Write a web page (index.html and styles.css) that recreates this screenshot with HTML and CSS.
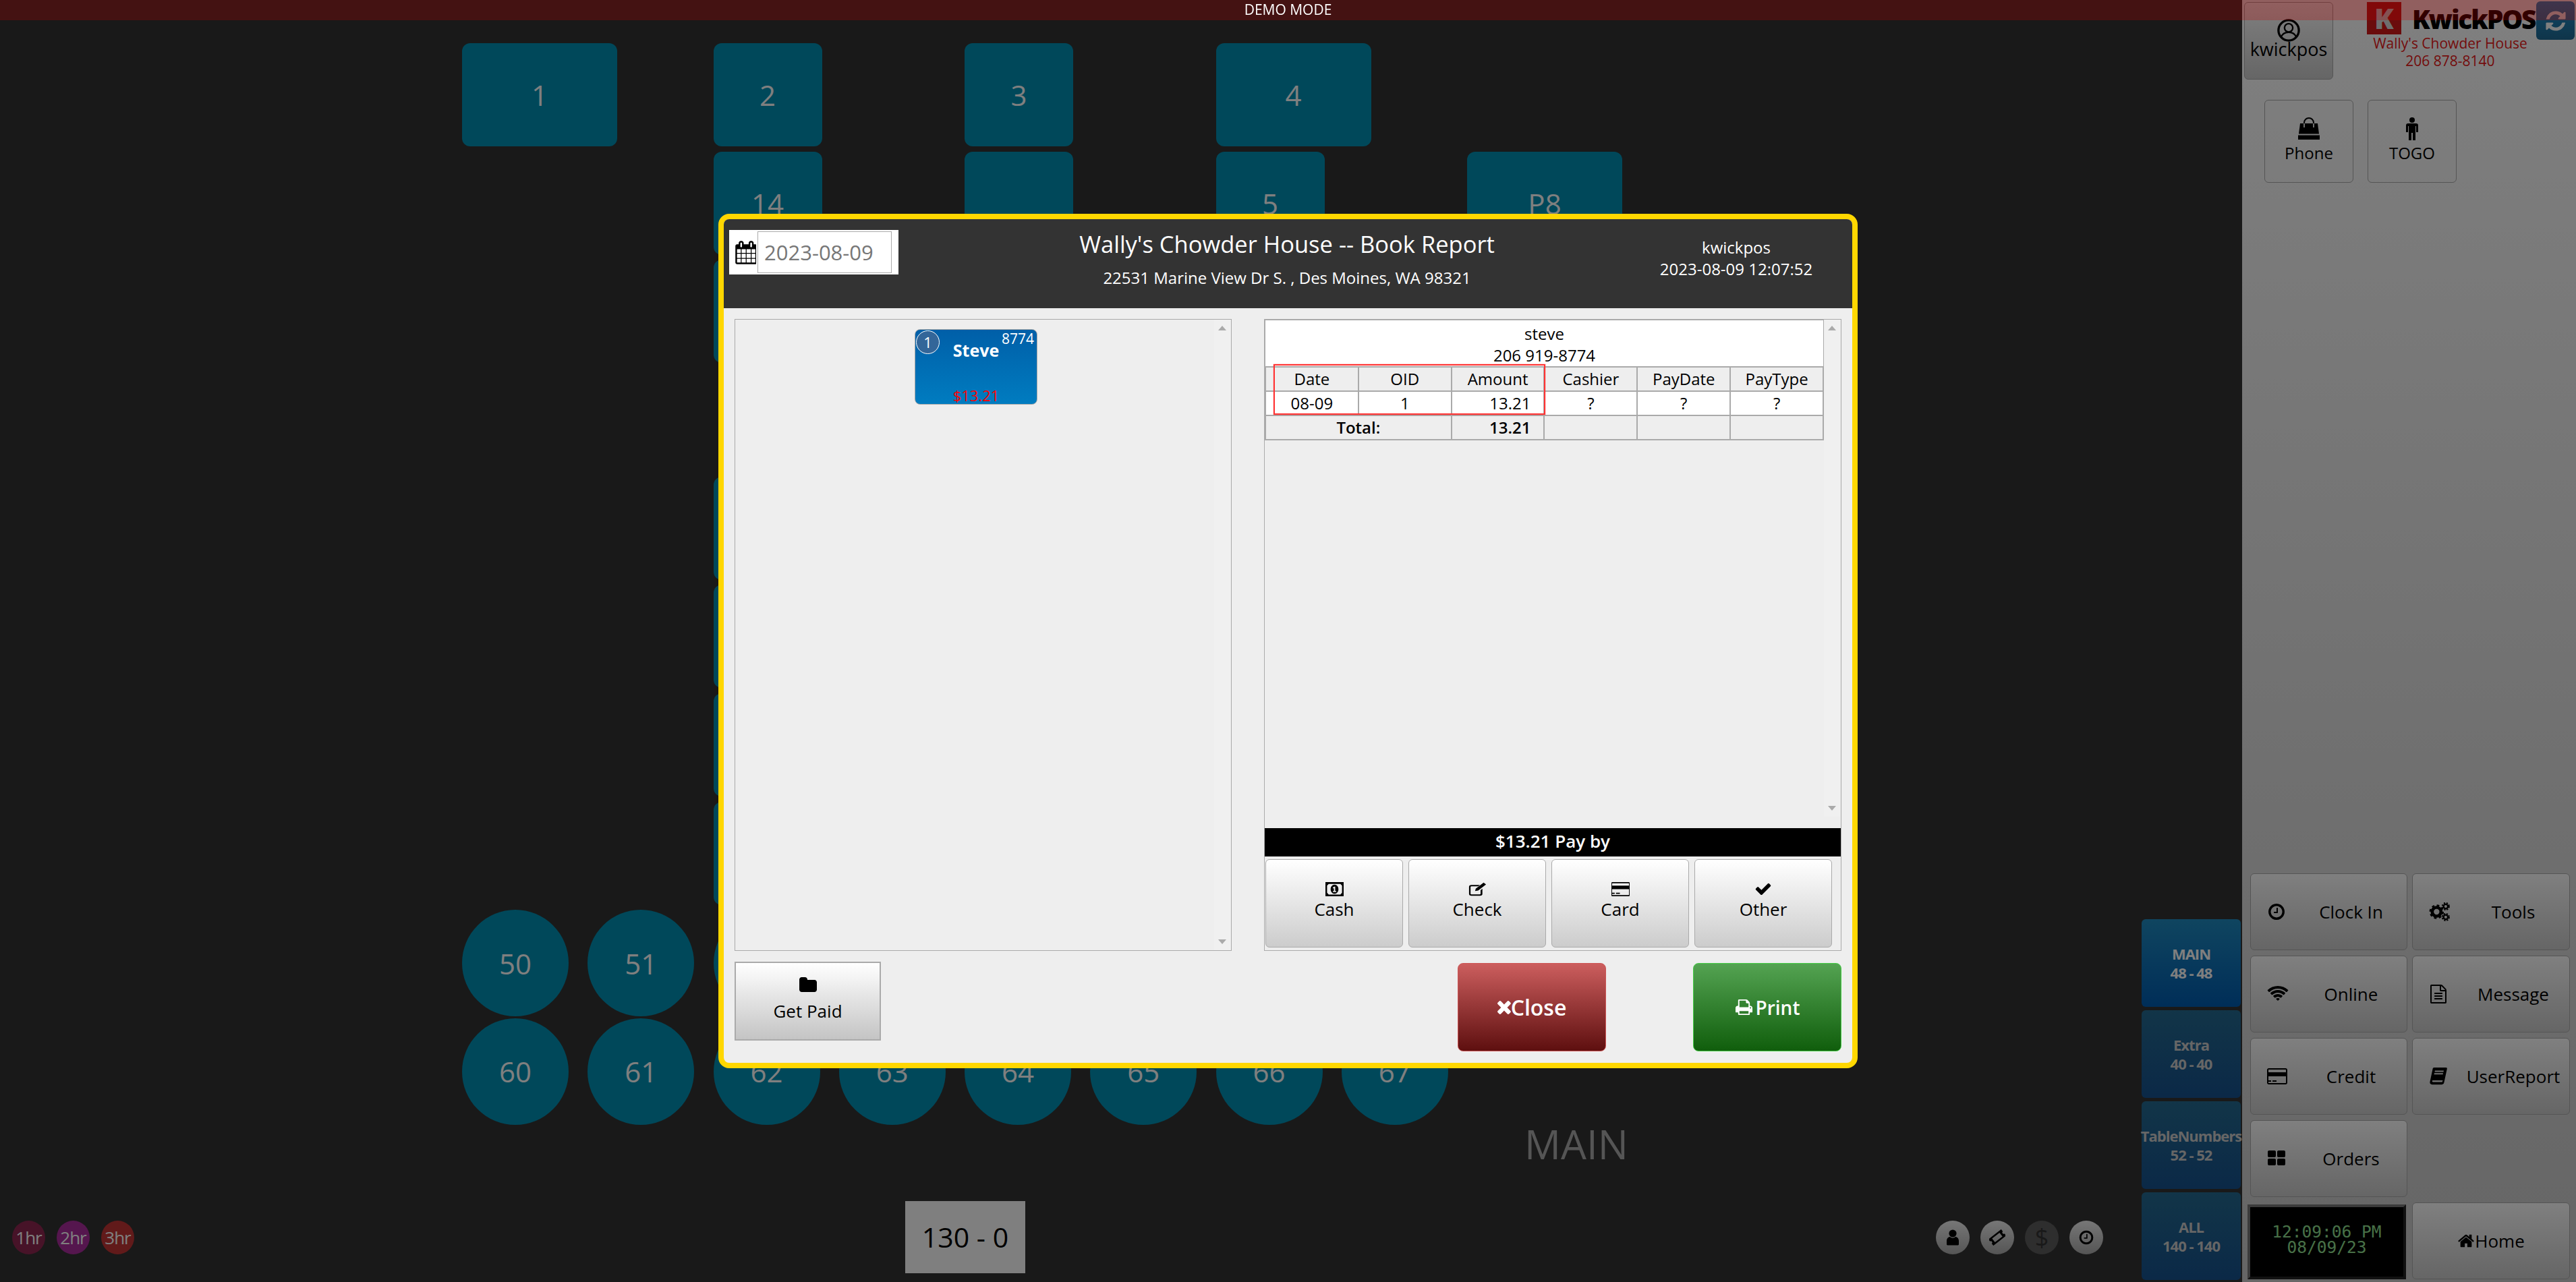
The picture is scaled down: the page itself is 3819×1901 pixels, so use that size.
FILE: index.html
```html
<!DOCTYPE html>
<html lang="en">
<head>
    <meta charset="UTF-8">
    <meta name="viewport" content="width=device-width, initial-scale=1.0">
    <title>KwickPOS - Book Report</title>
    <link rel="stylesheet" href="styles.css">
</head>
<body>
    <div class="demo-bar">DEMO MODE</div>

    <div class="screen">
        <main class="floor">
            <div class="floor-left">
                <div class="plan">
                    <div class="table wide c1 r1">1</div>
                    <div class="table c3 r1">2</div>
                    <div class="table c5 r1">3</div>
                    <div class="table wide c7 r1">4</div>
                    <div class="table c3 r2">14</div>
                    <div class="table c5 r2"></div>
                    <div class="table c7 r2">5</div>
                    <div class="table wide c9 r2">P8</div>
                    <div class="table c3 r3"></div>
                    <div class="table c3 r5"></div>
                    <div class="table c3 r6"></div>
                    <div class="table c3 r7"></div>
                    <div class="table c3 r8"></div>
                    <div class="table round c1 r9">50</div>
                    <div class="table round c2 r9">51</div>
                    <div class="table round c3 r9">52</div>
                    <div class="table round c1 r10">60</div>
                    <div class="table round c2 r10">61</div>
                    <div class="table round c3 r10">62</div>
                    <div class="table round c4 r10">63</div>
                    <div class="table round c5 r10">64</div>
                    <div class="table round c6 r10">65</div>
                    <div class="table round c7 r10">66</div>
                    <div class="table round c8 r10">67</div>
                </div>
                <div class="plan-name">MAIN</div>
                <div class="floor-footer">
                    <div class="timers">
                        <div class="timer t1">1hr</div>
                        <div class="timer t2">2hr</div>
                        <div class="timer t3">3hr</div>
                    </div>
                    <div class="counter">130 - 0</div>
                    <div class="filters">
                        <div class="filter">
                            <svg viewBox="0 0 20 24"><circle cx="10" cy="6" r="5.6"/><path d="M1 22v-5c0-4 3-6 5-6 1 1 2.400 1.700 4 1.700s3-.7 4-1.700c2 0 5 2 5 6v5c0 1-1 1.500-2 1.500H3c-1 0-2-.5-2-1.500z"/></svg>
                        </div>
                        <div class="filter">
                            <svg viewBox="0 0 24 24"><g transform="rotate(-38 12 12)"><path fill-rule="evenodd" d="M0 6h24v4a2 2 0 0 0 0 4v4H0v-4a2 2 0 0 0 0-4zM5 8.500v7h14v-7z"/></g></svg>
                        </div>
                        <div class="filter off">$</div>
                        <div class="filter">
                            <svg viewBox="0 0 1792 1792"><path d="M1024 544v448q0 14-9 23t-23 9h-320q-14 0-23-9t-9-23v-64q0-14 9-23t23-9h224v-352q0-14 9-23t23-9h64q14 0 23 9t9 23zm416 352q0-148-73-273t-198-198-273-73-273 73-198 198-73 273 73 273 198 198 273 73 273-73 198-198 73-273zm224 0q0 209-103 385.500t-279.500 279.500-385.500 103-385.500-103-279.500-279.500-103-385.500 103-385.500 279.500-279.500 385.500-103 385.500 103 279.500 279.500 103 385.500z"/></svg>
                        </div>
                    </div>
                </div>
            </div>
            <div class="tabs">
                <div class="tab active">MAIN<br>48 - 48</div>
                <div class="tab">Extra<br>40 - 40</div>
                <div class="tab">TableNumbers<br>52 - 52</div>
                <div class="tab">ALL<br>140 - 140</div>
            </div>
        </main>

        <aside class="side">
            <div class="side-top">
                <div class="btn user-btn">
                    <svg class="user-icon" viewBox="0 0 36 36"><circle cx="18" cy="18" r="16" fill="none" stroke="#000" stroke-width="3.500"/><circle cx="18" cy="14" r="6.500" fill="none" stroke="#000" stroke-width="2.500"/><path d="M6 29c2-6 7-8 12-8s10 2 12 8" fill="none" stroke="#000" stroke-width="2.500"/></svg>
                    <span>kwickpos</span>
                </div>
                <div class="brand">
                    <div class="logo"><span class="logo-mark">K</span><span class="logo-name">KwickPOS</span></div>
                    <div class="brand-text">Wally's Chowder House<br>206 878-8140</div>
                </div>
                <div class="sync">
                    <svg viewBox="0 0 1792 1792"><path d="M1639 1056q0 5-1 7-64 268-268 434.500t-478 166.500q-146 0-282.500-55t-243.500-157l-129 129q-19 19-45 19t-45-19-19-45v-448q0-26 19-45t45-19h448q26 0 45 19t19 45-19 45l-137 137q71 66 161 102t187 36q134 0 250-65t186-179q11-17 53-117 8-23 30-23h192q13 0 22.500 9.500t9.500 22.500zm25-800v448q0 26-19 45t-45 19h-448q-26 0-45-19t-19-45 19-45l138-138q-148-137-349-137-134 0-250 65t-186 179q-11 17-53 117-8 23-30 23h-199q-13 0-22.500-9.500t-9.500-22.500v-7q65-268 270-434.500t480-166.500q146 0 284 55.500t245 156.500l130-129q19-19 45-19t45 19 19 45z"/></svg>
                </div>
            </div>

            <div class="quick">
                <div class="quick-btn">
                    <svg viewBox="0 0 34 34"><path d="M4 9h26l2 15.500H2z"/><path d="M1 26.500h32V33H1z"/><path d="M10 9V8a7 7 0 0 1 14 0v1" fill="none" stroke="#000" stroke-width="2"/><path d="M10 9v6M24 9v6" fill="none" stroke="#ddd" stroke-width="2"/></svg>
                    <span>Phone</span>
                </div>
                <div class="quick-btn">
                    <svg viewBox="0 0 34 34"><circle cx="17" cy="4" r="4"/><path d="M11 9h12a3 3 0 0 1 3 3v10h-3v-9h-1v21h-4V23h-2v11h-4V13h-1v9H8V12a3 3 0 0 1 3-3z"/></svg>
                    <span>TOGO</span>
                </div>
            </div>

            <div class="menu">
                <div class="btn menu-btn">
                    <svg class="ico" viewBox="0 0 1792 1792"><path d="M1024 544v448q0 14-9 23t-23 9h-320q-14 0-23-9t-9-23v-64q0-14 9-23t23-9h224v-352q0-14 9-23t23-9h64q14 0 23 9t9 23zm416 352q0-148-73-273t-198-198-273-73-273 73-198 198-73 273 73 273 198 198 273 73 273-73 198-198 73-273zm224 0q0 209-103 385.500t-279.500 279.500-385.500 103-385.500-103-279.500-279.500-103-385.500 103-385.500 279.500-279.500 385.500-103 385.500 103 279.500 279.500 103 385.500z"/></svg>
                    <span>Clock In</span>
                </div>
                <div class="btn menu-btn">
                    <svg class="ico ico-wide" viewBox="0 0 34 30"><circle cx="12" cy="15" r="7" fill="none" stroke="#000" stroke-width="5"/><circle cx="12" cy="15" r="10" fill="none" stroke="#000" stroke-width="3" stroke-dasharray="4 3.850"/><circle cx="26.500" cy="6.500" r="3.500" fill="none" stroke="#000" stroke-width="2.500"/><circle cx="26.500" cy="6.500" r="5.500" fill="none" stroke="#000" stroke-width="2" stroke-dasharray="2.400 2"/><circle cx="26.500" cy="23.500" r="3.500" fill="none" stroke="#000" stroke-width="2.500"/><circle cx="26.500" cy="23.500" r="5.500" fill="none" stroke="#000" stroke-width="2" stroke-dasharray="2.400 2"/></svg>
                    <span>Tools</span>
                </div>
                <div class="btn menu-btn">
                    <svg class="ico ico-wide" viewBox="0 0 2048 1792"><path d="M1024 1523q-20 0-93-73.500t-73-93.500q0-32 62.500-54t103.500-22 103.500 22 62.500 54q0 20-73 93.500t-93 73.500zm270-271q-2 0-40-25t-101.500-50-128.500-25-128.500 25-101 50-40.500 25q-18 0-93.500-75t-75.500-93q0-13 10-23 78-77 196-121t233-44 233 44 196 121q10 10 10 23 0 18-75.500 93t-93.500 75zm273-272q-11 0-23-8-136-105-252-154.500t-268-49.500q-85 0-170.500 22t-149 53-113.500 62-79 53-31 22q-17 0-92-75t-75-93q0-12 10-22 132-132 320-205t380-73 380 73 320 205q10 10 10 22 0 18-75 93t-92 75zm271-271q-11 0-22-9-179-157-371.500-236.500t-420.500-79.500-420.500 79.500-371.500 236.500q-11 9-22 9-17 0-92.500-75t-75.500-93q0-13 10-23 187-186 445-288t527-102 527 102 445 288q10 10 10 23 0 18-75.500 93t-92.500 75z"/></svg>
                    <span>Online</span>
                </div>
                <div class="btn menu-btn">
                    <svg class="ico" viewBox="0 0 1792 1792"><path d="M1596 380q28 28 48 76t20 88v1152q0 40-28 68t-68 28h-1344q-40 0-68-28t-28-68v-1600q0-40 28-68t68-28h896q40 0 88 20t76 48zm-444-244v376h376q-10-29-22-41l-313-313q-12-12-41-22zm384 1528v-1024h-416q-40 0-68-28t-28-68v-416h-768v1536h1280zm-1024-864q0-14 9-23t23-9h704q14 0 23 9t9 23v64q0 14-9 23t-23 9h-704q-14 0-23-9t-9-23v-64zm736 224q14 0 23 9t9 23v64q0 14-9 23t-23 9h-704q-14 0-23-9t-9-23v-64q0-14 9-23t23-9h704zm0 256q14 0 23 9t9 23v64q0 14-9 23t-23 9h-704q-14 0-23-9t-9-23v-64q0-14 9-23t23-9h704z"/></svg>
                    <span>Message</span>
                </div>
                <div class="btn menu-btn">
                    <svg class="ico ico-wide" viewBox="0 0 2048 1792"><path d="M1760 128q66 0 113 47t47 113v1216q0 66-47 113t-113 47h-1600q-66 0-113-47t-47-113v-1216q0-66 47-113t113-47h1600zm-1600 128q-13 0-22.500 9.500t-9.500 22.500v224h1664v-224q0-13-9.500-22.500t-22.500-9.500h-1600zm1600 1280q13 0 22.500-9.500t9.500-22.500v-608h-1664v608q0 13 9.500 22.500t22.500 9.500h1600zm-1632-128v-128h256v128h-256zm384 0v-128h384v128h-384z"/></svg>
                    <span>Credit</span>
                </div>
                <div class="btn menu-btn">
                    <svg class="ico" viewBox="0 0 28 30"><path d="M7 1h19c1.500 0 2 1 1.700 2.200L23 25c-.4 1.800-1.700 3-3.500 3H4c-2.500 0-4-2-3.400-4.500L5 3c.2-1.200 1-2 2-2zm1.500 5-.4 2h14l.4-2zm-1 4-.4 2h14l.4-2zM5 21.500c-1 0-1.400 2.500.2 2.500H20l1-2.500z" fill-rule="evenodd"/></svg>
                    <span>UserReport</span>
                </div>
                <div class="btn menu-btn orders-btn">
                    <svg class="ico" viewBox="0 0 1792 1792"><path d="M832 1024v384q0 52-38 90t-90 38h-512q-52 0-90-38t-38-90v-384q0-52 38-90t90-38h512q52 0 90 38t38 90zm0-768v384q0 52-38 90t-90 38h-512q-52 0-90-38t-38-90v-384q0-52 38-90t90-38h512q52 0 90 38t38 90zm896 768v384q0 52-38 90t-90 38h-512q-52 0-90-38t-38-90v-384q0-52 38-90t90-38h512q52 0 90 38t38 90zm0-768v384q0 52-38 90t-90 38h-512q-52 0-90-38t-38-90v-384q0-52 38-90t90-38h512q52 0 90 38t38 90z"/></svg>
                    <span>Orders</span>
                </div>
                <div class="clock">12:09:06 PM<br>08/09/23</div>
                <div class="btn home-btn">
                    <svg viewBox="0 0 1792 1792"><path d="M1472 992v480q0 26-19 45t-45 19h-384v-384h-256v384h-384q-26 0-45-19t-19-45v-480q0-1 .5-3t.5-3l575-474 575 474q1 2 1 6zm223-69l-62 74q-8 9-21 11h-3q-13 0-21-7l-692-577-692 577q-12 8-24 7-13-2-21-11l-62-74q-8-10-7-23.500t11-21.500l719-599q32-26 76-26t76 26l244 204v-195q0-14 9-23t23-9h192q14 0 23 9t9 23v408l219 182q10 8 11 21.500t-7 23.500z"/></svg>
                    <span>Home</span>
                </div>
            </div>
        </aside>
    </div>

    <!-- book report dialog -->
    <div class="backdrop">
        <div class="modal">
            <header class="modal-head">
                <div class="date-box">
                    <svg viewBox="0 0 1664 1792"><path d="M192 1664h288v-288h-288v288zm352 0h320v-288h-320v288zm-352-352h288v-320h-288v320zm352 0h320v-320h-320v320zm-352-384h288v-288h-288v288zm736 736h320v-288h-320v288zm-384-736h320v-288h-320v288zm768 736h288v-288h-288v288zm-384-352h320v-320h-320v320zm-352-864v-288q0-13-9.500-22.500t-22.500-9.500h-64q-13 0-22.500 9.500t-9.500 22.500v288q0 13 9.500 22.500t22.500 9.500h64q13 0 22.500-9.500t9.500-22.500zm736 864h288v-320h-288v320zm-384-384h320v-288h-320v288zm384 0h288v-288h-288v288zm32-480v-288q0-13-9.500-22.500t-22.500-9.500h-64q-13 0-22.500 9.500t-9.500 22.500v288q0 13 9.500 22.500t22.500 9.500h64q13 0 22.500-9.500t9.500-22.500zm384-64v1280q0 52-38 90t-90 38h-1408q-52 0-90-38t-38-90v-1280q0-52 38-90t90-38h128v-96q0-66 47-113t113-47h64q66 0 113 47t47 113v96h384v-96q0-66 47-113t113-47h64q66 0 113 47t47 113v96h128q52 0 90 38t38 90z"/></svg>
                    <div class="date-input">2023-08-09</div>
                </div>
                <div class="head-title">
                    <h1>Wally's Chowder House -- Book Report</h1>
                    <p>22531 Marine View Dr S. , Des Moines, WA 98321</p>
                </div>
                <div class="head-user">kwickpos<br>2023-08-09 12:07:52</div>
            </header>

            <div class="modal-body">
                <section class="panel cards">
                    <div class="card">
                        <span class="card-num">1</span>
                        <span class="card-phone">8774</span>
                        <span class="card-name">Steve</span>
                        <span class="card-amt">$13.21</span>
                    </div>
                    <div class="scroll-arrows"><i class="up"></i><i class="down"></i></div>
                </section>

                <section class="panel report">
                    <div class="report-scroll">
                        <div class="report-table">
                            <div class="report-name">steve<br>206 919-8774</div>
                            <table>
                                <tr class="th"><td>Date</td><td>OID</td><td>Amount</td><td>Cashier</td><td>PayDate</td><td>PayType</td></tr>
                                <tr><td>08-09</td><td>1</td><td class="num">13.21</td><td>?</td><td>?</td><td>?</td></tr>
                                <tr class="total"><td colspan="2">Total:</td><td class="num">13.21</td><td></td><td></td><td></td></tr>
                            </table>
                            <div class="highlight"></div>
                        </div>
                        <div class="scroll-arrows"><i class="up"></i><i class="down"></i></div>
                    </div>
                    <div class="pay-bar">$13.21 Pay by</div>
                    <div class="pay-btns">
                        <div class="pay-btn">
                            <svg class="stretched" viewBox="0 0 28 20" preserveAspectRatio="none"><path fill-rule="evenodd" d="M0 0h28v20H0zM5 2.500 2.500 5v10L5 17.500h18l2.500-2.500V5L23 2.500z"/><path fill-rule="evenodd" d="M14 3.500c3.500 0 6 2.800 6 6.500s-2.500 6.500-6 6.500S8 13.700 8 10s2.500-6.500 6-6.500zm-2.500 4v1.300h1.500v3.900h-1.500V14h5v-1.300H15V6.500h-1.500z"/></svg>
                            <span>Cash</span>
                        </div>
                        <div class="pay-btn">
                            <svg class="stretched" viewBox="0 0 30 30" preserveAspectRatio="none"><path d="M20 25v-8l3-3v11a4 4 0 0 1-4 4H5a4 4 0 0 1-4-4V10a4 4 0 0 1 4-4h14l-3 3H5a1.500 1.500 0 0 0-1.500 1.500v14A1.500 1.500 0 0 0 5 26h13.500A1.500 1.500 0 0 0 20 25z"/><path d="M25 1l4 4-13 13-5 1 1-5z"/></svg>
                            <span>Check</span>
                        </div>
                        <div class="pay-btn">
                            <svg class="stretched" viewBox="128 128 1792 1536" preserveAspectRatio="none"><path d="M1760 128q66 0 113 47t47 113v1216q0 66-47 113t-113 47h-1600q-66 0-113-47t-47-113v-1216q0-66 47-113t113-47h1600zm-1600 128q-13 0-22.500 9.500t-9.500 22.500v224h1664v-224q0-13-9.500-22.500t-22.500-9.500h-1600zm1600 1280q13 0 22.500-9.500t9.500-22.500v-608h-1664v608q0 13 9.500 22.500t22.500 9.500h1600zm-1632-128v-128h256v128h-256zm384 0v-128h384v128h-384z" transform="translate(64 0)"/></svg>
                            <span>Card</span>
                        </div>
                        <div class="pay-btn">
                            <svg viewBox="0 0 1792 1792"><path d="M1671 566q0 40-28 68l-724 724-136 136q-28 28-68 28t-68-28l-136-136-362-362q-28-28-28-68t28-68l136-136q28-28 68-28t68 28l294 295 656-657q28-28 68-28t68 28l136 136q28 28 28 68z"/></svg>
                            <span>Other</span>
                        </div>
                    </div>
                </section>
            </div>

            <footer class="modal-foot">
                <div class="get-paid">
                    <svg viewBox="0 0 1792 1792"><path d="M1728 608v704q0 92-66 158t-158 66h-1216q-92 0-158-66t-66-158v-960q0-92 66-158t158-66h320q92 0 158 66t66 158v32h672q92 0 158 66t66 158z"/></svg>
                    <span>Get Paid</span>
                </div>
                <div class="action close-btn">
                    <svg viewBox="300 300 1200 1260"><path d="M1490 1322q0 40-28 68l-136 136q-28 28-68 28t-68-28l-294-294-294 294q-28 28-68 28t-68-28l-136-136q-28-28-28-68t28-68l294-294-294-294q-28-28-28-68t28-68l136-136q28-28 68-28t68 28l294 294 294-294q28-28 68-28t68 28l136 136q28 28 28 68t-28 68l-294 294 294 294q28 28 28 68z"/></svg>
                    <span>Close</span>
                </div>
                <div class="action print-btn">
                    <svg viewBox="0 0 1792 1792"><path d="M448 1536h896v-256h-896v256zm0-640h896v-384h-160q-40 0-68-28t-28-68v-160h-640v640zm1152 64q0-26-19-45t-45-19-45 19-19 45 19 45 45 19 45-19 19-45zm128 0v416q0 13-9.500 22.500t-22.500 9.500h-224v160q0 40-28 68t-68 28h-960q-40 0-68-28t-28-68v-160h-224q-13 0-22.500-9.500t-9.500-22.500v-416q0-79 56.500-135.500t135.500-56.500h64v-544q0-40 28-68t68-28h672q40 0 88 20t76 48l152 152q28 28 48 76t20 88v256h64q79 0 135.500 56.500t56.500 135.500z"/></svg>
                    <span>Print</span>
                </div>
            </footer>
        </div>
    </div>
</body>
</html>
```

FILE: styles.css
```css
* {
    box-sizing: border-box;
}
html, body {
    margin: 0;
    height: 100%;
}
body {
    font-family: "Open Sans", "Noto Sans", sans-serif;
    background-color: #333;
    overflow: hidden;
    color: #000;
}
svg {
    display: block;
    fill: currentColor;
}

/* demo strip stays above the dialog dimmer */
.demo-bar {
    position: absolute;
    top: 0;
    left: 0;
    right: 0;
    height: 30px;
    line-height: 29px;
    text-align: center;
    font-size: 21px;
    color: #fff;
    background-color: rgba(200, 0, 0, 0.25);
    z-index: 30;
}

.screen {
    display: flex;
    height: 100%;
}

/* floor plan */
.floor {
    flex: 1;
    display: flex;
    justify-content: space-between;
    min-width: 0;
}
.floor-left {
    width: 3175px;
    display: flex;
    flex-direction: column;
}
.plan {
    display: grid;
    grid-template-columns: repeat(9, 186.25px);
    grid-template-rows: repeat(10, 160.67px);
    padding: 64px 0 0 685px;
}
.table {
    width: 161px;
    height: 153px;
    background-color: #0090b4;
    border-radius: 12px;
    color: #fff;
    font-size: 42px;
    display: flex;
    justify-content: center;
    align-items: center;
}
.table.wide {
    width: 230px;
}
.table.round {
    width: 158px;
    height: 158px;
    border-radius: 50%;
}
.c1 { grid-column: 1; }
.c2 { grid-column: 2; }
.c3 { grid-column: 3; }
.c4 { grid-column: 4; }
.c5 { grid-column: 5; }
.c6 { grid-column: 6; }
.c7 { grid-column: 7; }
.c8 { grid-column: 8; }
.c9 { grid-column: 9; }
.r1 { grid-row: 1; }
.r2 { grid-row: 2; }
.r3 { grid-row: 3; }
.r5 { grid-row: 5; }
.r6 { grid-row: 6; }
.r7 { grid-row: 7; }
.r8 { grid-row: 8; }
.r9 { grid-row: 9; }
.r10 { grid-row: 10; }

.plan-name {
    margin: -15px 0 0 2260px;
    font-size: 60px;
    line-height: 80px;
    color: #aaa;
}
.floor-footer {
    margin-top: auto;
    height: 107px;
    margin-bottom: 13px;
    padding: 0 57px 0 18px;
    display: flex;
    align-items: center;
}
.timers {
    display: flex;
    gap: 17px;
}
.timer {
    width: 49px;
    height: 50px;
    border-radius: 50%;
    color: #fff;
    font-size: 26px;
    line-height: 50px;
    text-align: center;
    letter-spacing: -1px;
}
.t1 { background-color: #8e2650; }
.t2 { background-color: #aa2c9c; }
.t3 { background-color: #c23434; }
.counter {
    margin-left: 1143px;
    width: 178px;
    height: 107px;
    background-color: #fff;
    font-size: 41px;
    line-height: 107px;
    text-align: center;
}
.filters {
    margin-left: auto;
    display: flex;
    gap: 16px;
}
.filter {
    width: 50px;
    height: 50px;
    border-radius: 50%;
    background: linear-gradient(#eee, #aaa);
    display: flex;
    justify-content: center;
    align-items: center;
}
.filter svg {
    width: 24px;
    height: 24px;
}
.filter.off {
    background: #5c5c5c;
    color: #333;
    font-size: 36px;
}

.tabs {
    width: 147px;
    margin: auto 2px 3px 0;
    display: flex;
    flex-direction: column;
    gap: 4.500px;
}
.tab {
    height: 130.500px;
    border-radius: 6px;
    background: linear-gradient(#246a90, #16528f);
    color: #ccc;
    font-size: 22px;
    font-weight: 700;
    line-height: 28px;
    text-align: center;
    white-space: nowrap;
    display: flex;
    align-items: center;
    justify-content: center;
    letter-spacing: -1px;
}
.tab.active {
    background: linear-gradient(#1f8ac0, #005cb0);
    color: #fff;
}

/* right column */
.side {
    width: 495px;
    background: linear-gradient(#fff, #ccc);
    display: flex;
    flex-direction: column;
}
.side-top {
    display: flex;
    align-items: flex-start;
    padding: 3px 0 0 3px;
}
.btn {
    border: 1px solid #aaa;
    border-radius: 6px;
    background: linear-gradient(#fff, #ccc);
}
.user-btn {
    width: 132px;
    height: 115px;
    padding-top: 24px;
    display: flex;
    flex-direction: column;
    align-items: center;
    font-size: 27px;
    line-height: 30px;
}
.user-icon {
    width: 34px;
    height: 34px;
    margin-bottom: -4px;
}
.brand {
    margin-left: 50px;
    width: 247px;
}
.logo {
    display: flex;
    align-items: center;
    height: 48px;
    gap: 16px;
}
.logo-mark {
    flex: none;
    width: 51px;
    height: 48px;
    background-color: #d41818;
    color: #ddd;
    font-size: 42px;
    font-weight: 800;
    line-height: 48px;
    text-align: center;
}
.logo-name {
    font-size: 39px;
    font-weight: 800;
    letter-spacing: -2.200px;
    white-space: nowrap;
}
.brand-text {
    color: #e81818;
    font-size: 21px;
    line-height: 26px;
    text-align: center;
    white-space: nowrap;
}
.sync {
    width: 57px;
    height: 57px;
    margin: -1px 0 0 4px;
    border-radius: 6px;
    background: linear-gradient(#2090cc, #1f6a94);
    color: #fff;
    display: flex;
    align-items: center;
    justify-content: center;
}
.sync svg {
    width: 34px;
    height: 34px;
}
.quick {
    margin-top: 30px;
    padding-left: 33px;
    display: flex;
    gap: 21px;
}
.quick-btn {
    width: 132px;
    height: 123px;
    border: 1px solid #aaa;
    border-radius: 6px;
    padding-top: 25px;
    display: flex;
    flex-direction: column;
    align-items: center;
    font-size: 24px;
    line-height: 32px;
}
.quick-btn svg {
    width: 34px;
    height: 34px;
    margin-bottom: 3px;
}
.menu {
    margin-top: auto;
    padding: 0 9px 4px 12px;
    display: grid;
    grid-template-columns: 233px 234px;
    grid-auto-rows: 114px;
    gap: 8px 7px;
}
.menu-btn {
    display: grid;
    grid-template-columns: 66px 1fr;
    align-items: center;
    padding-left: 24px;
    font-size: 26px;
    text-align: center;
}
.menu-btn span {
    margin-left: -24px;
}
.ico {
    width: 28px;
    height: 28px;
}
.ico-wide {
    width: 32px;
}
.orders-btn {
    grid-column: 1;
}
.clock {
    grid-column: 1;
    width: 235px;
    height: 111px;
    margin: 3px 0 0 -4px;
    border: 4px outset #777;
    background-color: #000;
    color: #90e090;
    font-family: "DejaVu Sans Mono", monospace;
    font-size: 24.500px;
    line-height: 23px;
    text-align: center;
    padding-top: 25px;
}
.home-btn {
    display: flex;
    align-items: center;
    justify-content: center;
    font-size: 26px;
}
.home-btn svg {
    width: 26px;
    height: 26px;
}

/* dialog */
.backdrop {
    position: fixed;
    inset: 0;
    background-color: rgba(0, 0, 0, 0.5);
    display: flex;
    align-items: center;
    justify-content: center;
    z-index: 20;
}
.modal {
    width: 1689px;
    height: 1267px;
    border: 8px solid #ffd700;
    border-radius: 16px;
    background-color: #eee;
    display: flex;
    flex-direction: column;
    overflow: hidden;
}
.modal-head {
    height: 132px;
    flex: none;
    background-color: #333;
    color: #fff;
    display: flex;
    padding: 16px 0 0 8px;
}
.date-box {
    width: 251px;
    height: 66px;
    background-color: #fff;
    display: flex;
    align-items: center;
    padding: 0 10px 0 8px;
    gap: 2px;
}
.date-box svg {
    width: 32px;
    height: 35px;
    color: #000;
    flex: none;
}
.date-input {
    flex: 1;
    height: 62px;
    border: 1px solid #aaa;
    padding-left: 9px;
    color: #777;
    font-size: 31px;
    line-height: 60px;
}
.head-title {
    width: 1092px;
    padding-left: 60px;
    text-align: center;
}
.head-title h1 {
    margin: 0;
    font-size: 34.500px;
    font-weight: 400;
    line-height: 42px;
}
.head-title p {
    margin: 12px 0 0;
    font-size: 24px;
    line-height: 34px;
}
.head-user {
    flex: 1;
    padding: 10px 22px 0 0;
    font-size: 24px;
    line-height: 32px;
    text-align: center;
    white-space: nowrap;
}

.modal-body {
    height: 937px;
    flex: none;
    margin-top: 16px;
    padding: 0 16px;
    display: flex;
    justify-content: space-between;
}
.panel {
    border: 1px solid #aaa;
    position: relative;
}
.cards {
    width: 737px;
    padding-top: 14px;
    padding-left: 266px;
}
.card {
    position: relative;
    width: 182px;
    height: 112px;
    border: 1px solid #aaa;
    border-radius: 8px;
    background: linear-gradient(#005fa8, #007cc0);
    color: #fff;
    text-align: center;
}
.card-num {
    position: absolute;
    top: 1px;
    left: 1px;
    width: 35px;
    height: 35px;
    border: 1px solid #fff;
    border-radius: 50%;
    background-color: #369;
    font-size: 22px;
    line-height: 33px;
}
.card-phone {
    position: absolute;
    top: 0;
    right: 4px;
    font-size: 21px;
    line-height: 26px;
}
.card-name {
    display: block;
    padding-top: 11px;
    font-size: 25px;
    font-weight: 700;
    line-height: 38px;
}
.card-amt {
    display: block;
    margin-top: 34px;
    color: #f00;
    font-size: 22px;
    line-height: 28px;
}
.scroll-arrows {
    position: absolute;
    top: 0;
    bottom: 0;
    right: 1px;
    width: 24px;
    background-color: #f0f0f0;
}
.report-scroll .scroll-arrows {
    bottom: 17px;
}
.scroll-arrows i {
    position: absolute;
    left: 6px;
    border-left: 6px solid transparent;
    border-right: 6px solid transparent;
}
.scroll-arrows .up {
    top: 9px;
    border-bottom: 7px solid #aaa;
}
.scroll-arrows .down {
    bottom: 9px;
    border-top: 7px solid #aaa;
}
.report {
    width: 856px;
    display: flex;
    flex-direction: column;
}
.report-scroll {
    position: relative;
    height: 754px;
    flex: none;
}
.report-table {
    position: relative;
    width: 829px;
}
.report-name {
    height: 69px;
    background-color: #fff;
    border: 1px solid #aaa;
    border-bottom: 0;
    font-size: 24px;
    line-height: 32px;
    padding-top: 4px;
    text-align: center;
}
.report-table table {
    width: 100%;
    table-layout: fixed;
    border-collapse: collapse;
    font-size: 24px;
    text-align: center;
}
.report-table td {
    height: 36px;
    padding: 0;
    border: 2px solid #aaa;
    background-color: #fff;
    line-height: 32px;
}
.report-table .th td,
.report-table .total td {
    background-color: #eee;
}
.report-table .total td {
    font-weight: 600;
    border-bottom-width: 2px;
}
.report-table td.num {
    text-align: right;
    padding-right: 19px;
}
.highlight {
    position: absolute;
    left: 13px;
    top: 66px;
    width: 403px;
    height: 75px;
    border: 2px solid #f33;
    box-shadow: 0 0 1px #f33;
}
.pay-bar {
    height: 42px;
    background-color: #000;
    color: #fff;
    font-size: 26px;
    font-weight: 600;
    line-height: 38px;
    text-align: center;
}
.pay-btns {
    display: flex;
    gap: 8px;
    margin-top: 4px;
    padding-left: 1px;
}
.pay-btn {
    width: 204px;
    height: 131px;
    border: 1px solid #aaa;
    border-radius: 6px;
    background: linear-gradient(#fff, #ccc);
    display: flex;
    flex-direction: column;
    align-items: center;
    padding-top: 30px;
    font-size: 26px;
    line-height: 34px;
}
.pay-btn svg {
    width: 26px;
    height: 26px;
}
.pay-btn svg.stretched {
    width: 27px;
    height: 21px;
    margin: 3px 0 2px;
}

.modal-foot {
    flex: 1;
    padding: 16px 16px 0;
    display: flex;
    align-items: flex-start;
}
.get-paid {
    width: 217px;
    height: 117px;
    border: 2px solid #aaa;
    background: linear-gradient(#fff, #c4c4c4);
    display: flex;
    flex-direction: column;
    align-items: center;
    padding-top: 19px;
    font-size: 26px;
    line-height: 34px;
    gap: 7px;
}
.get-paid svg {
    width: 28px;
    height: 28px;
}
.action {
    width: 220px;
    height: 131px;
    margin-top: 2px;
    border-radius: 8px;
    color: #fff;
    font-weight: 600;
    display: flex;
    align-items: center;
    justify-content: center;
}
.close-btn {
    margin-left: 855px;
    border: 1px solid #c55;
    background: linear-gradient(#cc5e5e, #5e0f0f);
    font-size: 32px;
}
.close-btn svg {
    width: 20px;
    height: 21px;
}
.print-btn {
    margin-left: auto;
    gap: 4px;
    border: 1px solid #4c4;
    background: linear-gradient(#54a352, #105e0c);
    font-size: 28px;
}
.print-btn svg {
    width: 27px;
    height: 27px;
}
```
